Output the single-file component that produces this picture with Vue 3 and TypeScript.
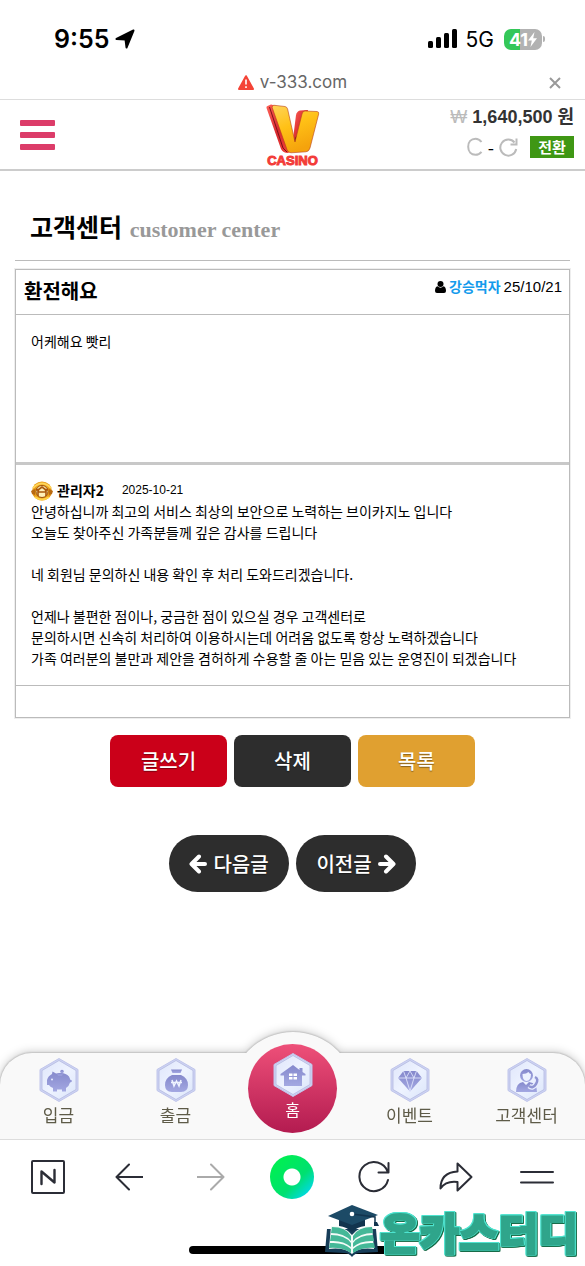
<script setup lang="ts">
interface NavItem {
  id: string
  label: string
  home?: boolean
}

const navItems: NavItem[] = [
  { id: 'deposit', label: '입금' },
  { id: 'withdraw', label: '출금' },
  { id: 'home', label: '홈', home: true },
  { id: 'event', label: '이벤트' },
  { id: 'support', label: '고객센터' },
]

const replyLines: string[] = [
  '안녕하십니까 최고의 서비스 최상의 보안으로 노력하는 브이카지노 입니다',
  '오늘도 찾아주신 가족분들께 깊은 감사를 드립니다',
  '',
  '네 회원님 문의하신 내용 확인 후 처리 도와드리겠습니다.',
  '',
  '언제나 불편한 점이나, 궁금한 점이 있으실 경우 고객센터로',
  '문의하시면 신속히 처리하여 이용하시는데 어려움 없도록 항상 노력하겠습니다',
  '가족 여러분의 불만과 제안을 겸허하게 수용할 줄 아는 믿음 있는 운영진이 되겠습니다',
]
</script>

<template>
  <div class="screen">
    <div class="status">
      <div class="status-left">
        <span class="clock">9:55</span>
        <svg width="20" height="20" viewBox="0 0 20 20" aria-hidden="true">
          <path d="M18.500 1.500 1.500 10l9 .5 1 8z" stroke="#000" stroke-width="2" stroke-linejoin="round" />
        </svg>
      </div>
      <div class="status-right">
        <svg width="30" height="20" viewBox="0 0 30 20" aria-hidden="true">
          <rect x="0" y="12" width="5" height="7" rx="1.500" />
          <rect x="8" y="8" width="5" height="11" rx="1.500" />
          <rect x="16" y="4" width="5" height="15" rx="1.500" />
          <rect x="24" y="0" width="5" height="19" rx="1.500" />
        </svg>
        <span class="network">5G</span>
        <span class="battery">
          <span>41</span>
          <svg width="9" height="15" viewBox="0 0 9 15" aria-hidden="true">
            <path d="M6.500 0 0 8.500h3.800L2.500 15 9 6.300H5.200z" fill="#fff" />
          </svg>
        </span>
      </div>
    </div>

    <div class="address">
      <svg width="16" height="15" viewBox="0 0 16 15" aria-hidden="true">
        <path d="M8 1.200 15 14H1z" fill="#f44336" stroke="#f44336" stroke-width="2" stroke-linejoin="round" />
        <path d="M8 4.500v5M8 11.300v1.700" stroke="#fff" stroke-width="1.600" />
      </svg>
      <span>v-333.com</span>
      <button class="close" type="button" aria-label="닫기">
        <svg width="12" height="12" viewBox="0 0 12 12">
          <path d="M1 1l10 10M11 1 1 11" stroke="#999" stroke-width="2" />
        </svg>
      </button>
    </div>

    <header class="header">
      <button class="menu" type="button" aria-label="메뉴"><i></i><i></i><i></i></button>
      <a class="logo" href="#" aria-label="V CASINO">
        <svg width="56" height="50" viewBox="0 0 56 50" aria-hidden="true">
          <defs>
            <linearGradient id="gold" x1="0" y1="0" x2=".4" y2="1">
              <stop offset="0" stop-color="#ffd45a" />
              <stop offset=".5" stop-color="#ffc116" />
              <stop offset="1" stop-color="#f5a30c" />
            </linearGradient>
            <linearGradient id="ruby" x1="0" y1="0" x2="1" y2="1">
              <stop offset="0" stop-color="#ff6258" />
              <stop offset=".5" stop-color="#d92b30" />
              <stop offset="1" stop-color="#f14139" />
            </linearGradient>
          </defs>
          <path d="M1.500 4Q1 2.500 2.500 2L6 .5 12 2l14 45-3 2q-5 0-7-4z" fill="url(#ruby)" />
          <path d="M31 11q1-4 4-4.500l8-.5-10 35-5-6z" fill="url(#ruby)" />
          <path d="M4.500 3 18 44l4 4" fill="none" stroke="#7e1018" stroke-width="1" />
          <path d="m28 37 7-10-4 13z" fill="#641016" />
          <path d="M8.500 1.200 20 2.500q2 .4 2.600 2.500L30 38l7-28q.6-3 3-3l12 .5q2.200.2 1.700 2.500L45 44q-1 3.500-4 3.800l-15 1q-3 0-4-3.200L7 3z" fill="url(#gold)" stroke="#b8401a" stroke-width=".6" />
        </svg>
        <span>CASINO</span>
      </a>
      <div class="wallet">
        <div class="amount"><span class="won">₩</span> 1,640,500 원</div>
        <div class="convert">
          <svg width="16" height="20" viewBox="0 0 16 20" aria-hidden="true">
            <path d="M14.500 5Q12 1.800 8.500 1.800C4 1.800 1.200 5 1.200 9.800s2.900 8 7.300 8q3.500 0 6-3" />
          </svg>
          <span>-</span>
          <button class="refresh" type="button" aria-label="새로고침">
            <svg width="19" height="20" viewBox="0 0 19 20">
              <path d="M15.500 5.500A8 8 0 1 0 17.200 12M17.500 1.500v6h-6" />
            </svg>
          </button>
          <button class="switch" type="button">전환</button>
        </div>
      </div>
    </header>

    <main class="content">
      <h1>고객센터 <small>customer center</small></h1>

      <article class="post">
        <div class="post-head">
          <h2>환전해요</h2>
          <div class="meta">
            <svg width="11" height="12" viewBox="0 0 11 12" aria-hidden="true">
              <circle cx="5.500" cy="3" r="3" />
              <path d="M2.500 5.300Q5.500 8 8.500 5.300 11 6 11 10q0 2-2 2H2q-2 0-2-2 0-4 2.500-4.700z" />
            </svg>
            <b>강승먹자</b>
            <time>25/10/21</time>
          </div>
        </div>
        <div class="question">어케해요 빳리</div>
        <section class="reply">
          <div class="reply-head">
            <svg width="22" height="20" viewBox="0 0 22 20" aria-hidden="true">
              <ellipse cx="11" cy="10" rx="10" ry="9.500" fill="#e69a17" />
              <path d="M2 7q9-9 18 0" fill="none" stroke="#ffd65a" stroke-width="2" />
              <path d="M0 10l4-2v6l-3-1zM22 10l-4-2v6l3-1z" fill="#b96911" />
              <circle cx="11" cy="10.500" r="6" fill="#fff0b8" stroke="#9c5009" />
              <path d="M7 15V9l4-3 4 3v6M7 11h8M5 8l3 2M17 8l-3 2" fill="none" stroke="#a9570b" stroke-width="1.600" />
              <path d="M4 16q7 5 14 0" fill="none" stroke="#ffd247" stroke-width="2" />
            </svg>
            <b>관리자2</b>
            <time>2025-10-21</time>
          </div>
          <p v-for="(line, i) in replyLines" :key="i">{{ line }}</p>
        </section>
        <div class="post-foot"></div>
      </article>

      <div class="actions">
        <button class="write" type="button">글쓰기</button>
        <button type="button">삭제</button>
        <button class="list" type="button">목록</button>
      </div>
      <div class="pager">
        <button type="button">
          <svg width="18" height="20" viewBox="0 0 18 20" aria-hidden="true"><path d="M16 10H3M10 2.500 2.500 10l7.500 7.500" /></svg>
          다음글
        </button>
        <button type="button">
          이전글
          <svg width="18" height="20" viewBox="0 0 18 20" aria-hidden="true"><path d="M2 10h13M8 2.500l7.500 7.500L8 17.500" /></svg>
        </button>
      </div>
    </main>

    <svg class="defs" width="0" height="0" aria-hidden="true">
      <defs>
        <linearGradient id="hexFill" x1="0" y1="0" x2="1" y2="1">
          <stop offset="0" stop-color="#dfe6fb" />
          <stop offset=".5" stop-color="#eef3ff" />
          <stop offset="1" stop-color="#dbe5fa" />
        </linearGradient>
        <linearGradient id="glyphFill" x1="0" y1="0" x2="0" y2="1">
          <stop offset="0" stop-color="#8589cc" />
          <stop offset="1" stop-color="#a3a8e2" />
        </linearGradient>
      </defs>
    </svg>

    <nav class="tabs">
      <a v-for="item in navItems" :key="item.id" href="#" :class="{ home: item.home }">
        <svg width="40" height="44" viewBox="0 0 40 44" aria-hidden="true">
          <path d="M20 .5 39 11.500v21L20 43.500 1 32.500v-21z" fill="#cdd3f3" stroke="#c0c5ea" />
          <path d="M20 2.500 37 12.500v19L20 41.500 3 31.500v-19z" fill="url(#hexFill)" stroke="#b4b9e0" stroke-width=".8" />
          <g v-if="item.id === 'deposit'" fill="url(#glyphFill)">
            <path d="M8 22q1-4 5-6l.5-2.500 3.500 2q9-2 13 3l1.500 3.500 1.500.5-.5 1.500-1.500.5q-1 4-4 5.500v3.500h-4v-2h-5v2h-4V30q-3-1-4-3H8z" />
            <circle cx="23" cy="13.500" r="1.800" />
            <path d="M18 16q3-2 6 0l-1 1.500h-4z" />
            <circle cx="13" cy="21.500" r="1" fill="#e8edff" />
          </g>
          <g v-else-if="item.id === 'withdraw'" fill="url(#glyphFill)">
            <path d="M15 11.500h11l-1.500 3.500h-8z" />
            <path d="M16 17h9q7 3 7 10 0 7-7 7h-9q-7 0-7-7 0-7 7-10z" />
            <path d="m16 22 2 6 2.500-5 2.500 5 2-6M15 24.500h11" fill="none" stroke="#eef3ff" stroke-width="1.500" />
          </g>
          <g v-else-if="item.id === 'home'">
            <path d="M20 12 7.500 21v1.500H11V33h18V22.500h3.500V21l-3-2v-4h-3v2z" fill="url(#glyphFill)" />
            <path d="M16 20.500h3.500v2.500H16zM20.500 20.500H24v2.500h-3.500zM16 24h3.500v2.500H16zM20.500 24H24v2.500h-3.500z" fill="#fff" />
          </g>
          <g v-else-if="item.id === 'event'">
            <path d="M13.500 13h13l5.500 7-12 13.500L8 20z" fill="url(#glyphFill)" />
            <path d="M8 20h24M13.500 13l2.500 7 4 13 4-13 2.500-7M16 20l4-7 4 7" fill="none" stroke="#e6ebff" stroke-width=".8" />
          </g>
          <g v-else fill="url(#glyphFill)">
            <path d="M9 34q0-9 7-10l3 3 3-3q8 1 8 10z" />
            <circle cx="19.500" cy="17.500" r="6.500" />
            <path d="M15.500 16q4 0 6-2 1 2 2.500 2 0 7-4.500 7-4 0-4-7z" fill="#edf2ff" />
            <path d="M28 19q4 2 1 7-3 5-7 2" fill="none" stroke="#e8edff" stroke-width="5" />
            <path d="M28 19q4 2 1 7-3 5-7 2" fill="none" stroke="#8f94d2" stroke-width="2.500" />
          </g>
        </svg>
        <span>{{ item.label }}</span>
      </a>
    </nav>

    <footer class="browser">
      <div class="tools">
        <button type="button" aria-label="네이버">
          <svg width="34" height="34" viewBox="0 0 34 34"><rect x="1" y="1" width="32" height="32" rx="1" /><path d="M10.500 24V11.500l13 11V10" stroke-width="2.400" /></svg>
        </button>
        <button type="button" aria-label="뒤로">
          <svg width="28" height="28" viewBox="0 0 28 28"><path d="M27.500 14H2M14 1.500 1.500 14 14 26.500" /></svg>
        </button>
        <button class="dim" type="button" aria-label="앞으로">
          <svg width="28" height="28" viewBox="0 0 28 28"><path d="M.5 14H26M14 1.500 26.500 14 14 26.500" /></svg>
        </button>
        <button type="button" aria-label="그린닷"><span class="dot"></span></button>
        <button type="button" aria-label="새로고침">
          <svg width="32" height="32" viewBox="0 0 32 32"><path d="M29.500 10.500A14.500 14.500 0 1 0 30 19M30.500 2v9.500H20.500" /></svg>
        </button>
        <button type="button" aria-label="공유">
          <svg width="34" height="30" viewBox="0 0 34 30"><path d="M18.500 1.500 32.500 15l-14 13.500V20Q7 18.500 1.500 26.500 1.500 10.500 18.500 9.500z" /></svg>
        </button>
        <button type="button" aria-label="더보기">
          <svg width="34" height="14" viewBox="0 0 34 14"><path d="M1 2h32M1 12.500h32" /></svg>
        </button>
      </div>
      <div class="indicator"></div>
    </footer>

    <div class="brand">
      <svg width="56" height="52" viewBox="0 0 56 52" aria-hidden="true">
        <path d="M3 24 1 47l19 1q5 0 8 4 3-4 8-4l18-1-2-23" fill="#173d58" />
        <path d="M7 21q14 0 21 9 7-9 20-9l2 23q-15-2-22 5-8-7-23-5z" fill="#f4fbf8" />
        <path d="M8 22q14 0 19 9v5q-7-8-20-8zM7 30q14 0 20 8v4q-8-7-21-6zM6 38q14-1 21 6v4q-9-6-22-5zM48 22q-14 0-19 9v5q7-8 20-8zM49 30q-14 0-20 8v4q8-7 21-6zM50 38q-14-1-21 6v4q9-6 22-5z" fill="#45b898" />
        <path d="M15 13v8q8 1 13 6 5-5 13-6v-8z" fill="#12344e" />
        <path d="M28 0 54 10 28 20 4 11z" fill="#1c4a66" />
        <path d="M28 9l23 3v7" fill="none" stroke="#12344e" stroke-width="1.500" />
        <path d="M50 17h3l2 4-5 0z" fill="#12344e" />
        <circle cx="28" cy="9" r="2.300" fill="#fff" />
      </svg>
      <span>온카스터디</span>
    </div>
  </div>
</template>

<style>
body {
  margin: 0;
  background: #fff;
}
</style>

<style scoped>
.screen {
  position: relative;
  display: flex;
  flex-direction: column;
  min-height: 100vh;
  overflow: hidden;
  background: #fff;
  color: #000;
  font-family: "Noto Sans CJK KR", "Liberation Sans", sans-serif;
  font-size: 14px;
  line-height: 21px;
}
.screen * {
  box-sizing: border-box;
}
button {
  padding: 0;
  border: 0;
  background: none;
  color: inherit;
  font: inherit;
}
a {
  color: inherit;
  text-decoration: none;
}
svg {
  display: block;
  flex: none;
}
h1, h2, p {
  margin: 0;
}
.status {
  display: flex;
  align-items: center;
  justify-content: space-between;
  height: 66px;
  padding: 12px 40px 0 54px;
  font-family: Inter, sans-serif;
}
.status-left, .status-right {
  display: flex;
  align-items: center;
  gap: 8px;
}
.status-left {
  gap: 6px;
}
.clock {
  font-size: 25px;
  font-weight: 600;
}
.network {
  font-size: 21px;
}
.battery {
  position: relative;
  display: flex;
  align-items: center;
  justify-content: center;
  width: 38px;
  height: 21px;
  margin: 0 3px 0 2px;
  border-radius: 7px;
  background: linear-gradient(90deg, #34c759 42%, #b2b2b2 42%);
  color: #fff;
  font-size: 18px;
  font-weight: 700;
}
.battery::after {
  content: "";
  position: absolute;
  right: -3px;
  width: 2px;
  height: 6px;
  border-radius: 0 2px 2px 0;
  background: #b2b2b2;
}
.address {
  position: relative;
  display: flex;
  align-items: center;
  justify-content: center;
  gap: 6px;
  height: 34px;
  border-bottom: 1px solid #ddd;
  color: #666;
  font-family: Inter, sans-serif;
  font-size: 17px;
}
.close {
  position: absolute;
  right: 24px;
}
.header {
  display: grid;
  grid-template-columns: 1fr auto 1fr;
  height: 71px;
  padding: 0 11px;
  border-bottom: 2px solid #ccc;
}
.menu {
  display: flex;
  flex-direction: column;
  justify-content: space-between;
  align-self: center;
  width: 35px;
  height: 30px;
  margin-left: 9px;
}
.menu i {
  height: 6px;
  border-radius: 1px;
  background: #dc3c69;
}
.logo {
  display: flex;
  flex-direction: column;
  align-items: center;
  padding-top: 4px;
  color: #f33b38;
  font: 700 13px/13px "Liberation Sans", sans-serif;
  -webkit-text-stroke: 1px #f33b38;
}
.wallet {
  display: flex;
  flex-direction: column;
  align-items: flex-end;
  padding-top: 6px;
}
.amount {
  color: #333;
  font-family: "Liberation Sans", "Noto Sans CJK KR", sans-serif;
  font-size: 18px;
  font-weight: 700;
  line-height: 22px;
  white-space: nowrap;
}
.won {
  color: #bbb;
  font-weight: 400;
}
.convert {
  display: flex;
  align-items: center;
  gap: 5px;
  margin-top: 8px;
  font-size: 18px;
}
.convert svg {
  fill: none;
  stroke: #bbb;
  stroke-width: 2;
}
.switch {
  width: 44px;
  height: 22px;
  margin-left: 7px;
  background: #3f9714;
  color: #fff;
  font-size: 15px;
  font-weight: 700;
  line-height: 22px;
}
.content {
  flex: 1;
  padding: 0 15px 140px;
}
h1 {
  height: 90px;
  padding: 37px 15px 0;
  border-bottom: 1px solid #bbb;
  font-size: 25px;
  font-weight: 700;
  line-height: 36px;
}
h1 small {
  margin-left: 2px;
  color: #999;
  font-family: "Liberation Serif", serif;
  font-size: 22px;
}
.post {
  margin-top: 8px;
  border: 1px solid #bbb;
  box-shadow: 0 0 0 1px #eee;
}
.post-head {
  display: flex;
  justify-content: space-between;
  height: 44px;
  padding: 6px 7px 0 8px;
}
h2 {
  font-size: 20px;
  font-weight: 700;
  line-height: 30px;
}
.meta {
  display: flex;
  align-items: center;
  gap: 3px;
  height: 21px;
}
.meta b {
  color: #149bec;
}
.meta time {
  font-family: "Liberation Sans", sans-serif;
  font-size: 15px;
}
.question {
  height: 148px;
  padding: 16px 15px;
  border-top: 1px solid #bbb;
}
.reply {
  padding: 15px 15px 16px;
  border-top: 3px solid #c8c8c8;
}
.reply-head {
  display: flex;
  align-items: center;
  gap: 4px;
  height: 21px;
}
.reply-head time {
  margin-left: 14px;
  font-family: "Liberation Sans", sans-serif;
  font-size: 12px;
}
.reply p {
  min-height: 21px;
}
.post-foot {
  height: 32px;
  border-top: 1px solid #bbb;
}
.actions, .pager {
  display: flex;
  justify-content: center;
  gap: 7px;
  margin-top: 17px;
}
.actions button, .pager button {
  width: 117px;
  height: 52px;
  padding-bottom: 2px;
  border-radius: 8px;
  background: #2d2d2d;
  color: #fff;
  font-size: 20px;
  font-weight: 500;
  text-shadow: 0 1px 1px #0006;
}
.actions .write {
  background: #cb0019;
}
.actions .list {
  background: #e0a030;
}
.pager {
  margin-top: 48px;
}
.pager button {
  display: flex;
  align-items: center;
  justify-content: center;
  gap: 6px;
  width: 120px;
  height: 57px;
  padding-bottom: 0;
  border-radius: 29px;
}
.pager svg {
  fill: none;
  stroke: #fff;
  stroke-width: 4;
  stroke-linecap: round;
  stroke-linejoin: round;
}
.defs {
  position: absolute;
}
.tabs {
  position: relative;
  display: grid;
  grid-template-columns: repeat(5, 1fr);
  height: 86px;
  border-radius: 32px 32px 0 0;
  background: #f9f9f9;
  color: #5e5b48;
  font-size: 17px;
  filter: drop-shadow(0 0 1px #999) drop-shadow(0 -1px 4px #0003);
}
.tabs::before {
  content: "";
  position: absolute;
  top: -21px;
  left: calc(50% - 63px);
  width: 126px;
  height: 126px;
  border-radius: 50%;
  background: #f9f9f9;
}
.tabs a {
  position: relative;
  display: flex;
  flex-direction: column;
  align-items: center;
  gap: 2px;
  padding-top: 5px;
}
.tabs .home {
  justify-self: center;
  width: 89px;
  height: 89px;
  margin-top: -9px;
  padding-top: 9px;
  border-radius: 50%;
  background: linear-gradient(#ee5079, #b31b50);
  color: #fff;
  font-size: 16px;
}
.browser {
  position: relative;
  height: 127px;
  padding: 14px 7px 0;
  border-top: 1px solid #ddd;
  background: #fff;
}
.tools {
  display: grid;
  grid-template-columns: repeat(7, 1fr);
  height: 46px;
}
.tools button {
  display: flex;
  align-items: center;
  justify-content: center;
}
.tools svg {
  fill: none;
  stroke: #2b2d36;
  stroke-width: 2;
  stroke-linejoin: round;
  stroke-linecap: round;
}
.tools .dim svg {
  stroke: #aaa;
}
.dot {
  width: 44px;
  height: 44px;
  border-radius: 50%;
  background: radial-gradient(circle, #fff 8px, #fff0 9px), linear-gradient(135deg, #00ee55 20%, #00e070 60%, #00d8ee 90%);
}
.indicator {
  width: 208px;
  height: 8px;
  margin: 46px auto 0;
  border-radius: 4px;
  background: #000;
}
.brand {
  position: absolute;
  right: 7px;
  bottom: 9px;
  display: flex;
  align-items: center;
}
.brand span {
  color: #2fa58b;
  font-size: 43px;
  font-weight: 900;
  line-height: 52px;
  -webkit-text-stroke: 2px #2fa58b;
  filter: drop-shadow(1px 0 0 #4ee3cf) drop-shadow(-1px 0 0 #4ee3cf) drop-shadow(0 -1px 0 #4ee3cf) drop-shadow(1px 1px 0 #176b48);
}
</style>
